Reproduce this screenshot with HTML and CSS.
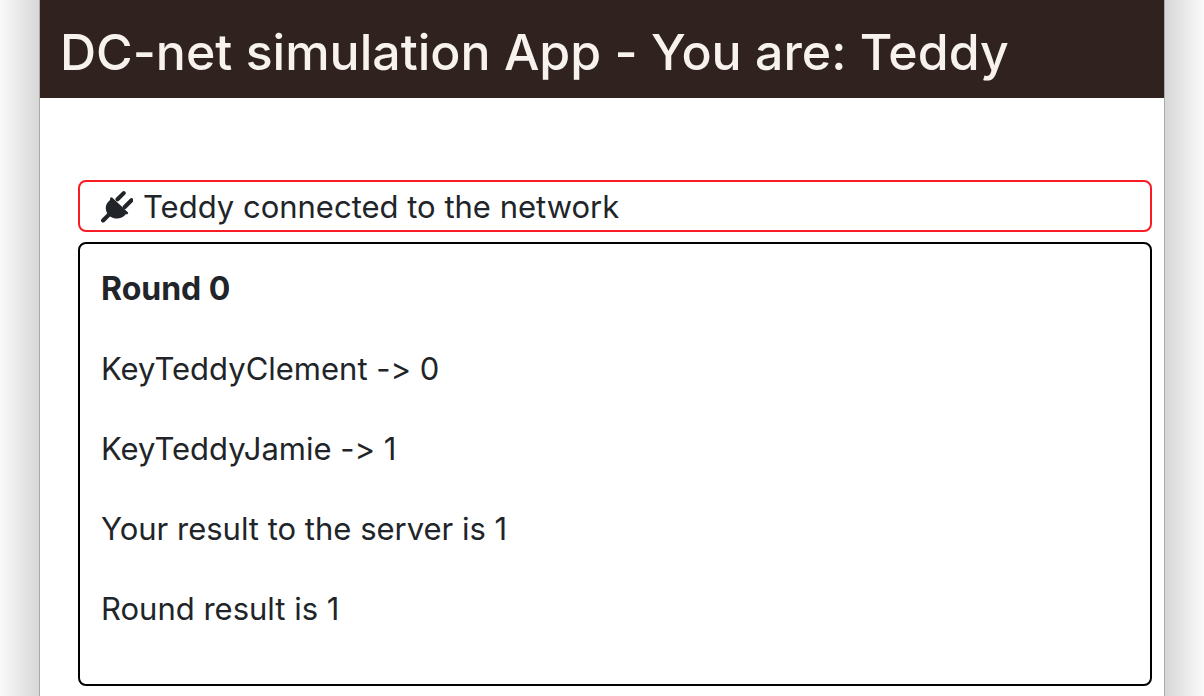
FILE: index.html
```html
<!DOCTYPE html>
<html lang="en">
<head>
<meta charset="utf-8">
<title>DC-net simulation App</title>
<link rel="stylesheet" href="styles.css">
</head>
<body>
<div class="window">
  <header class="header"><h1 class="title">DC-net simulation App - You are: Teddy</h1></header>
  <main class="content">
    <div class="notice">
      <svg class="plug" viewBox="0 0 32 32" aria-hidden="true">
        <path class="prongs" d="M3 29.500 9 23.500M17 9 23 3M24 16.500 30.500 10"/>
        <path d="M10 7.500Q11 6.500 12 7.500L27 21.500Q28 22.500 26.500 23.500L25 23.500C21 28.500 14.500 29 9.500 25.500L7.500 23.500C4.500 18.500 5 13.500 9.500 10Z"/>
      </svg>
      <span>Teddy connected to the network</span>
    </div>
    <section class="round">
      <h2 class="line heading">Round 0</h2>
      <p class="line">KeyTeddyClement -&gt; 0</p>
      <p class="line">KeyTeddyJamie -&gt; 1</p>
      <p class="line">Your result to the server is 1</p>
      <p class="line">Round result is 1</p>
    </section>
  </main>
</div>
</body>
</html>
```
FILE: styles.css
```css
* { box-sizing: border-box; }
body {
  margin: 0;
  padding: 0 40px;
  min-height: 100vh;
  display: flex;
  background: linear-gradient(to right, #fafafa 0, #d6d6d6 40px, #d6d6d6 calc(100% - 40px), #fafafa 100%);
  color: #212529;
  font-family: Inter, "Liberation Sans", sans-serif;
  font-variant-ligatures: none;
}
.window { flex: 1; background: #fff; box-shadow: 0 0 0 1px #aaa; }
.header { background: #30231f; padding: 20px 20px 14px; }
.title {
  margin: 0;
  color: #f7f2ee;
  font-size: 50px;
  line-height: 64px;
  font-weight: 500;
}
.content { padding: 82px 12px 10px 38px; }
.notice {
  display: flex;
  align-items: center;
  gap: 10px;
  padding: 1px 20px 0;
  border: 2px solid #f91c24;
  border-radius: 8px;
  font-size: 31px;
  line-height: 47px;
}
.plug { width: 33px; height: 33px; fill: currentColor; }
.prongs { fill: none; stroke: currentColor; stroke-width: 4; stroke-linecap: round; }
.round {
  margin-top: 10px;
  padding: 21px 21px 51px;
  border: 2px solid #000;
  border-radius: 8px;
}
.line { margin: 0 0 32px; font-size: 31px; line-height: 48px; font-weight: 400; }
.line:last-child { margin-bottom: 0; }
.heading { font-size: 32px; font-weight: 700; }
```
